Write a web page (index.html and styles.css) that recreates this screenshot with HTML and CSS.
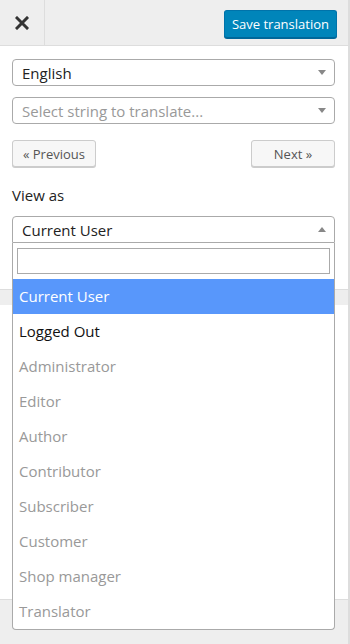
FILE: index.html
```html
<!DOCTYPE html>
<html>
<head>
<link rel="stylesheet" href="styles.css">
</head>
<body>

<div class="sidebar">
  <div class="topbar">
    <button class="close-btn" aria-label="Close">
      <svg width="14" height="14" viewBox="0 0 14 14">
        <path d="M2 2 L12 12 M12 2 L2 12" stroke="#333" stroke-width="3" stroke-linecap="square"/>
      </svg>
    </button>
    <div class="topbar-actions">
      <button class="save-btn">Save translation</button>
    </div>
  </div>

  <div class="controls">
    <div class="select">
      <span class="select-value">English</span>
      <span class="arrow down"></span>
    </div>
    <div class="select">
      <span class="select-value placeholder">Select string to translate...</span>
      <span class="arrow down"></span>
    </div>

    <div class="nav-row">
      <button class="nav-btn">&laquo; Previous</button>
      <button class="nav-btn next">Next &raquo;</button>
    </div>

    <div class="field-label">View as</div>

    <div class="select-wrap">
      <div class="select open">
        <span class="select-value">Current User</span>
        <span class="arrow up"></span>
      </div>
      <div class="dropdown">
        <div class="search-box"><input type="text" class="search-input"></div>
        <ul class="options">
          <li class="highlighted">Current User</li>
          <li>Logged Out</li>
          <li class="disabled">Administrator</li>
          <li class="disabled">Editor</li>
          <li class="disabled">Author</li>
          <li class="disabled">Contributor</li>
          <li class="disabled">Subscriber</li>
          <li class="disabled">Customer</li>
          <li class="disabled">Shop manager</li>
          <li class="disabled">Translator</li>
        </ul>
      </div>
    </div>
  </div>

  <div class="divider"></div>
  <div class="content"></div>
  <div class="footer"></div>
</div>

</body>
</html>
```

FILE: styles.css
```css
body {
  margin: 0;
  background-color: #ddd;
  font-family: "Open Sans", "Noto Sans", sans-serif;
}

.sidebar {
  width: 348px;
  height: 644px;
  display: flex;
  flex-direction: column;
  background-color: #fff;
}

.topbar {
  height: 45px;
  flex-shrink: 0;
  display: flex;
  background-color: #eee;
  border-bottom: 1px solid #ddd;
}

.close-btn {
  width: 45px;
  height: 45px;
  padding: 0;
  border: 0;
  border-right: 1px solid #ddd;
  background: transparent;
  display: flex;
  align-items: center;
  justify-content: center;
}

.topbar-actions {
  flex: 1;
  display: flex;
  justify-content: flex-end;
  align-items: flex-start;
  padding: 10px 11px 0 0;
}

.save-btn {
  height: 28px;
  padding: 0 7px;
  background-color: #0085ba;
  border: 1px solid #0073aa;
  border-bottom-color: #006799;
  border-radius: 3px;
  box-shadow: 0 1px 0 #006799;
  color: #fff;
  font-family: inherit;
  font-size: 13px;
}

.controls {
  height: 230px;
  flex-shrink: 0;
  padding: 13px 13px 0 12px;
  position: relative;
}

.select {
  height: 25px;
  border: 1px solid #aaa;
  border-radius: 4px;
  display: flex;
  align-items: center;
  justify-content: space-between;
  padding: 0 8px 0 9px;
  margin-bottom: 11px;
  background-color: #fff;
}

.select-value {
  font-size: 15px;
  color: #222;
}

.select-value.placeholder {
  color: #999;
}

.arrow {
  width: 0;
  height: 0;
  border-left: 4px solid transparent;
  border-right: 4px solid transparent;
}

.arrow.down {
  border-top: 5px solid #888;
}

.arrow.up {
  border-bottom: 5px solid #888;
}

.nav-row {
  display: flex;
  justify-content: space-between;
  margin-top: 16px;
}

.nav-btn {
  width: 84px;
  height: 27px;
  padding: 0;
  background-color: #f7f7f7;
  border: 1px solid #ccc;
  border-radius: 3px;
  box-shadow: 0 1px 0 #ccc;
  color: #555;
  font-family: inherit;
  font-size: 13px;
}

.field-label {
  margin-top: 18px;
  height: 31px;
  font-size: 15px;
  color: #222;
}

.select-wrap {
  position: relative;
}

.select.open {
  margin-bottom: 0;
  border-bottom-left-radius: 0;
  border-bottom-right-radius: 0;
}

.dropdown {
  position: absolute;
  left: 0;
  right: 0;
  top: 27px;
  z-index: 2;
  background-color: #fff;
  border: 1px solid #aaa;
  border-top: 0;
  border-radius: 0 0 4px 4px;
}

.search-box {
  padding: 5px 4px 5px 4px;
}

.search-input {
  display: block;
  box-sizing: border-box;
  width: 100%;
  height: 26px;
  border: 1px solid #aaa;
  margin: 0;
}

.options {
  list-style-type: none;
  margin: 0;
  padding: 0;
}

.options li {
  height: 35px;
  line-height: 35px;
  padding-left: 6px;
  font-size: 15px;
  color: #111;
}

.options li.highlighted {
  background-color: #5897fb;
  color: #fff;
}

.options li.disabled {
  color: #999;
}

.divider {
  height: 15px;
  flex-shrink: 0;
  background-color: #eee;
  border-top: 1px solid #ddd;
}

.content {
  height: 294px;
  flex-shrink: 0;
}

.footer {
  flex: 1;
  background-color: #eee;
  border-top: 1px solid #ddd;
}
```
